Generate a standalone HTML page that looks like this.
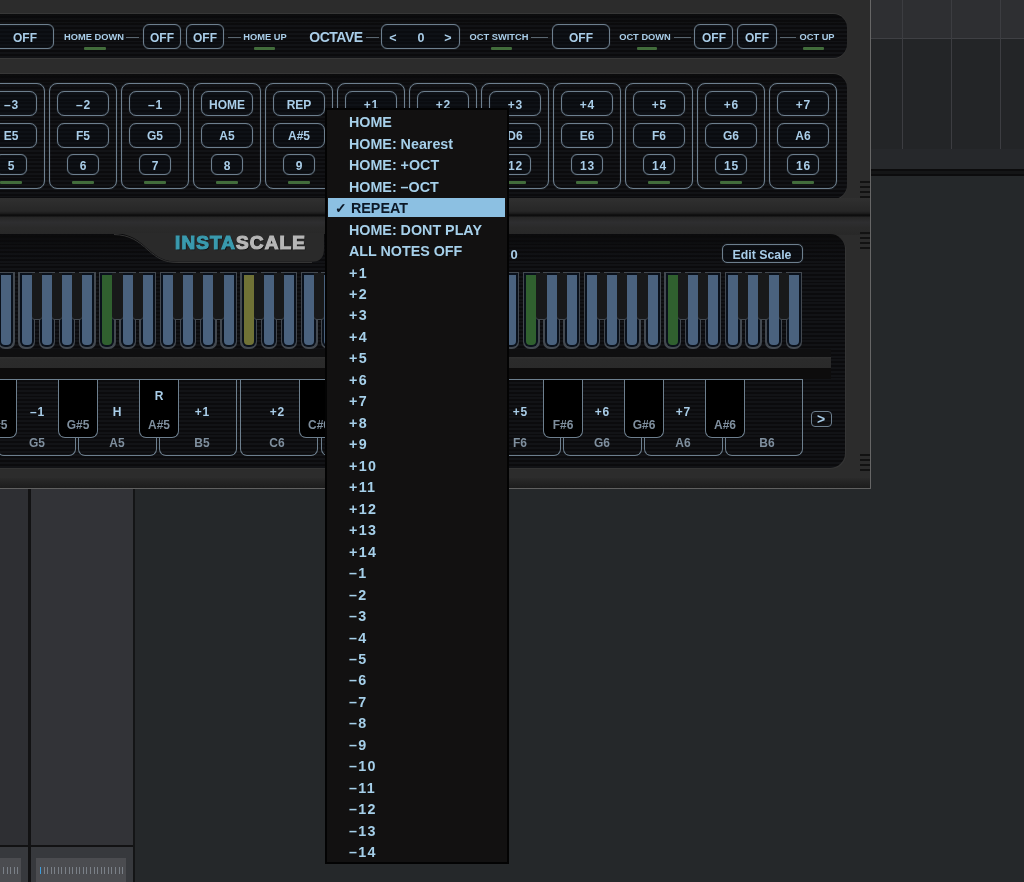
<!DOCTYPE html>
<html><head><meta charset="utf-8"><style>
html,body{margin:0;padding:0;width:1024px;height:882px;overflow:hidden;background:#25282a;position:relative;font-family:"Liberation Sans", sans-serif;}
div{position:absolute;}
.t{-webkit-font-smoothing:antialiased;will-change:transform;height:20px;line-height:20px;text-align:center;font-weight:bold;white-space:nowrap;}
</style></head><body>
<div style="left:871.00px;top:0.00px;width:153.00px;height:38.00px;background:#2e2f32"></div>
<div style="left:871.00px;top:38.00px;width:153.00px;height:1.00px;background:#3f4044"></div>
<div style="left:871.00px;top:39.00px;width:153.00px;height:110.00px;background:#232527"></div>
<div style="left:902.00px;top:0.00px;width:1.00px;height:149.00px;background:#3c3d41"></div>
<div style="left:951.00px;top:0.00px;width:1.00px;height:149.00px;background:#3c3d41"></div>
<div style="left:1000.00px;top:0.00px;width:1.00px;height:149.00px;background:#3c3d41"></div>
<div style="left:871.00px;top:149.00px;width:153.00px;height:20.00px;background:#26282b"></div>
<div style="left:871.00px;top:176.00px;width:153.00px;height:313.00px;background:#25282a"></div>
<div style="left:871.00px;top:169.00px;width:153.00px;height:7.00px;background:#0c0c0d"></div>
<div style="left:871.00px;top:171.00px;width:153.00px;height:3.00px;background:#141516"></div>
<div style="left:0.00px;top:489.00px;width:28.00px;height:393.00px;background:#2e2f33"></div>
<div style="left:28.00px;top:489.00px;width:2.50px;height:393.00px;background:#121213"></div>
<div style="left:30.50px;top:489.00px;width:102.50px;height:356.00px;background:#323337"></div>
<div style="left:133.00px;top:489.00px;width:2.00px;height:393.00px;background:#141516"></div>
<div style="left:0.00px;top:845.00px;width:133.00px;height:2.00px;background:#121213"></div>
<div style="left:0.00px;top:847.00px;width:28.00px;height:35.00px;background:#37393d"></div>
<div style="left:30.50px;top:847.00px;width:102.50px;height:35.00px;background:#37393d"></div>
<div style="left:36.00px;top:858.00px;width:90.00px;height:24.00px;background:#4b4c50"></div>
<div style="left:0.00px;top:858.00px;width:21.00px;height:24.00px;background:#4b4c50"></div>
<div style="left:40px;top:867px;width:1px;height:7px;background:#3c9ee0"></div><div style="left:44px;top:867px;width:1px;height:7px;background:#7a8088"></div><div style="left:47px;top:867px;width:1px;height:7px;background:#7a8088"></div><div style="left:51px;top:867px;width:1px;height:7px;background:#7a8088"></div><div style="left:54px;top:867px;width:1px;height:7px;background:#7a8088"></div><div style="left:58px;top:867px;width:1px;height:7px;background:#7a8088"></div><div style="left:61px;top:867px;width:1px;height:7px;background:#7a8088"></div><div style="left:65px;top:867px;width:1px;height:7px;background:#7a8088"></div><div style="left:69px;top:867px;width:1px;height:7px;background:#7a8088"></div><div style="left:72px;top:867px;width:1px;height:7px;background:#7a8088"></div><div style="left:76px;top:867px;width:1px;height:7px;background:#7a8088"></div><div style="left:79px;top:867px;width:1px;height:7px;background:#7a8088"></div><div style="left:83px;top:867px;width:1px;height:7px;background:#7a8088"></div><div style="left:86px;top:867px;width:1px;height:7px;background:#7a8088"></div><div style="left:90px;top:867px;width:1px;height:7px;background:#7a8088"></div><div style="left:94px;top:867px;width:1px;height:7px;background:#7a8088"></div><div style="left:97px;top:867px;width:1px;height:7px;background:#7a8088"></div><div style="left:101px;top:867px;width:1px;height:7px;background:#7a8088"></div><div style="left:104px;top:867px;width:1px;height:7px;background:#7a8088"></div><div style="left:108px;top:867px;width:1px;height:7px;background:#7a8088"></div><div style="left:111px;top:867px;width:1px;height:7px;background:#7a8088"></div><div style="left:115px;top:867px;width:1px;height:7px;background:#7a8088"></div><div style="left:119px;top:867px;width:1px;height:7px;background:#7a8088"></div><div style="left:122px;top:867px;width:1px;height:7px;background:#7a8088"></div><div style="left:3px;top:867px;width:1px;height:7px;background:#7a8088"></div><div style="left:7px;top:867px;width:1px;height:7px;background:#7a8088"></div><div style="left:10px;top:867px;width:1px;height:7px;background:#7a8088"></div><div style="left:14px;top:867px;width:1px;height:7px;background:#7a8088"></div><div style="left:17px;top:867px;width:1px;height:7px;background:#7a8088"></div>
<div style="left:0.00px;top:0.00px;width:870.00px;height:488.00px;background:#2c2c2c"></div>
<div style="left:0.00px;top:478.00px;width:870.00px;height:10.00px;background:linear-gradient(to bottom,#2a2a2a,#1c1c1c)"></div>
<div style="left:870.00px;top:0.00px;width:1.00px;height:489.00px;background:#666"></div>
<div style="left:0.00px;top:488.00px;width:871.00px;height:1.00px;background:#606060"></div>
<div style="left:-20.00px;top:14.30px;width:867.30px;height:43.50px;border-radius:14px;background:linear-gradient(to bottom,rgba(10,10,11,.8),rgba(10,10,11,0) 10px),repeating-linear-gradient(to bottom,#121316 0px,#121316 1.9px,#0b0b0d 1.9px,#0b0b0d 3.8px);box-shadow:0 1px 0 #383838,0 -1px 0 #373737"></div>
<div style="left:-10.00px;top:24.30px;width:64.00px;height:24.40px;border:1.3px solid #6d7f8e;border-radius:6px;box-sizing:border-box;box-shadow:0 0 1px rgba(120,140,158,.55),inset 0 0 1px rgba(120,140,158,.55);background:rgba(8,14,22,0.35)"></div>
<div class="t" style="left:-75.00px;top:27.90px;width:200px;font-size:12px;color:#a9cde8;">OFF</div>
<div class="t" style="left:-6.50px;top:27.20px;width:200px;font-size:9.3px;color:#a9cde8;">HOME DOWN</div>
<div style="left:84.00px;top:47.00px;width:22.00px;height:3.30px;background:#426c3b;border-radius:1px"></div>
<div style="left:126.00px;top:37.00px;width:13.00px;height:1.20px;background:#5a6670"></div>
<div style="left:143.00px;top:24.30px;width:38.00px;height:24.40px;border:1.3px solid #6d7f8e;border-radius:6px;box-sizing:border-box;box-shadow:0 0 1px rgba(120,140,158,.55),inset 0 0 1px rgba(120,140,158,.55);background:rgba(8,14,22,0.35)"></div>
<div class="t" style="left:62.00px;top:27.90px;width:200px;font-size:12px;color:#a9cde8;">OFF</div>
<div style="left:185.50px;top:24.30px;width:38.50px;height:24.40px;border:1.3px solid #6d7f8e;border-radius:6px;box-sizing:border-box;box-shadow:0 0 1px rgba(120,140,158,.55),inset 0 0 1px rgba(120,140,158,.55);background:rgba(8,14,22,0.35)"></div>
<div class="t" style="left:104.80px;top:27.90px;width:200px;font-size:12px;color:#a9cde8;">OFF</div>
<div style="left:228.00px;top:37.00px;width:12.60px;height:1.20px;background:#5a6670"></div>
<div class="t" style="left:165.00px;top:27.20px;width:200px;font-size:9.3px;color:#a9cde8;">HOME UP</div>
<div style="left:254.00px;top:47.00px;width:21.00px;height:3.30px;background:#426c3b;border-radius:1px"></div>
<div class="t" style="left:235.80px;top:26.90px;width:200px;font-size:14px;color:#a9cde8;letter-spacing:-0.5px">OCTAVE</div>
<div style="left:366.00px;top:37.00px;width:13.00px;height:1.20px;background:#5a6670"></div>
<div style="left:381.00px;top:24.30px;width:78.50px;height:24.40px;border:1.3px solid #6d7f8e;border-radius:6px;box-sizing:border-box;box-shadow:0 0 1px rgba(120,140,158,.55),inset 0 0 1px rgba(120,140,158,.55);background:rgba(8,14,22,0.35)"></div>
<div class="t" style="left:292.50px;top:27.90px;width:200px;font-size:12.5px;color:#a9cde8;">&lt;</div>
<div class="t" style="left:321.00px;top:27.90px;width:200px;font-size:12.5px;color:#a9cde8;">0</div>
<div class="t" style="left:348.00px;top:27.90px;width:200px;font-size:12.5px;color:#a9cde8;">&gt;</div>
<div class="t" style="left:398.60px;top:27.20px;width:200px;font-size:9.3px;color:#a9cde8;">OCT SWITCH</div>
<div style="left:491.00px;top:47.00px;width:21.00px;height:3.30px;background:#426c3b;border-radius:1px"></div>
<div style="left:531.00px;top:37.00px;width:17.00px;height:1.20px;background:#5a6670"></div>
<div style="left:552.00px;top:24.30px;width:58.00px;height:24.40px;border:1.3px solid #6d7f8e;border-radius:6px;box-sizing:border-box;box-shadow:0 0 1px rgba(120,140,158,.55),inset 0 0 1px rgba(120,140,158,.55);background:rgba(8,14,22,0.35)"></div>
<div class="t" style="left:481.00px;top:27.90px;width:200px;font-size:12px;color:#a9cde8;">OFF</div>
<div class="t" style="left:545.30px;top:27.20px;width:200px;font-size:9.3px;color:#a9cde8;">OCT DOWN</div>
<div style="left:637.00px;top:47.00px;width:20.00px;height:3.30px;background:#426c3b;border-radius:1px"></div>
<div style="left:674.00px;top:37.00px;width:16.50px;height:1.20px;background:#5a6670"></div>
<div style="left:694.40px;top:24.30px;width:39.10px;height:24.40px;border:1.3px solid #6d7f8e;border-radius:6px;box-sizing:border-box;box-shadow:0 0 1px rgba(120,140,158,.55),inset 0 0 1px rgba(120,140,158,.55);background:rgba(8,14,22,0.35)"></div>
<div class="t" style="left:614.00px;top:27.90px;width:200px;font-size:12px;color:#a9cde8;">OFF</div>
<div style="left:737.40px;top:24.30px;width:39.40px;height:24.40px;border:1.3px solid #6d7f8e;border-radius:6px;box-sizing:border-box;box-shadow:0 0 1px rgba(120,140,158,.55),inset 0 0 1px rgba(120,140,158,.55);background:rgba(8,14,22,0.35)"></div>
<div class="t" style="left:657.00px;top:27.90px;width:200px;font-size:12px;color:#a9cde8;">OFF</div>
<div style="left:780.00px;top:37.00px;width:16.00px;height:1.20px;background:#5a6670"></div>
<div class="t" style="left:717.00px;top:27.20px;width:200px;font-size:9.3px;color:#a9cde8;">OCT UP</div>
<div style="left:802.60px;top:47.00px;width:21.40px;height:3.30px;background:#426c3b;border-radius:1px"></div>
<div style="left:-20.00px;top:73.70px;width:867.30px;height:125.30px;border-radius:14px;background:linear-gradient(to bottom,rgba(10,10,11,.85),rgba(10,10,11,0) 14px),repeating-linear-gradient(to bottom,#121316 0px,#121316 1.9px,#0b0b0d 1.9px,#0b0b0d 3.8px);box-shadow:0 1px 0 #383838,0 -1px 0 #373737"></div>
<div style="left:-23.20px;top:83.30px;width:68.40px;height:105.80px;border:1.3px solid #6d7f8e;border-radius:8px;box-sizing:border-box;box-shadow:0 0 1px rgba(120,140,158,.55),inset 0 0 1px rgba(120,140,158,.55)"></div>
<div style="left:-15.30px;top:91.00px;width:52.60px;height:25.00px;border:1.3px solid #6d7f8e;border-radius:7px;box-sizing:border-box;background:rgba(8,14,22,0.35);box-shadow:0 0 1px rgba(120,140,158,.55),inset 0 0 1px rgba(120,140,158,.55)"></div>
<div style="left:-15.30px;top:122.70px;width:52.60px;height:25.00px;border:1.3px solid #6d7f8e;border-radius:7px;box-sizing:border-box;background:rgba(8,14,22,0.35);box-shadow:0 0 1px rgba(120,140,158,.55),inset 0 0 1px rgba(120,140,158,.55)"></div>
<div style="left:-5.20px;top:154.30px;width:32.40px;height:21.20px;border:1.3px solid #6d7f8e;border-radius:6px;box-sizing:border-box;background:rgba(8,14,22,0.35);box-shadow:0 0 1px rgba(120,140,158,.55),inset 0 0 1px rgba(120,140,158,.55)"></div>
<div style="left:0.10px;top:180.50px;width:21.80px;height:3.50px;background:#426c3b;border-radius:1px"></div>
<div class="t" style="left:-89.00px;top:94.90px;width:200px;font-size:12px;color:#a9cde8;letter-spacing:0.8px;text-indent:0.8px">&#8211;3</div>
<div class="t" style="left:-89.00px;top:126.20px;width:200px;font-size:12px;color:#a9cde8;">E5</div>
<div class="t" style="left:-89.00px;top:156.40px;width:200px;font-size:12px;color:#a9cde8;letter-spacing:0.8px;text-indent:0.8px">5</div>
<div style="left:48.80px;top:83.30px;width:68.40px;height:105.80px;border:1.3px solid #6d7f8e;border-radius:8px;box-sizing:border-box;box-shadow:0 0 1px rgba(120,140,158,.55),inset 0 0 1px rgba(120,140,158,.55)"></div>
<div style="left:56.70px;top:91.00px;width:52.60px;height:25.00px;border:1.3px solid #6d7f8e;border-radius:7px;box-sizing:border-box;background:rgba(8,14,22,0.35);box-shadow:0 0 1px rgba(120,140,158,.55),inset 0 0 1px rgba(120,140,158,.55)"></div>
<div style="left:56.70px;top:122.70px;width:52.60px;height:25.00px;border:1.3px solid #6d7f8e;border-radius:7px;box-sizing:border-box;background:rgba(8,14,22,0.35);box-shadow:0 0 1px rgba(120,140,158,.55),inset 0 0 1px rgba(120,140,158,.55)"></div>
<div style="left:66.80px;top:154.30px;width:32.40px;height:21.20px;border:1.3px solid #6d7f8e;border-radius:6px;box-sizing:border-box;background:rgba(8,14,22,0.35);box-shadow:0 0 1px rgba(120,140,158,.55),inset 0 0 1px rgba(120,140,158,.55)"></div>
<div style="left:72.10px;top:180.50px;width:21.80px;height:3.50px;background:#426c3b;border-radius:1px"></div>
<div class="t" style="left:-17.00px;top:94.90px;width:200px;font-size:12px;color:#a9cde8;letter-spacing:0.8px;text-indent:0.8px">&#8211;2</div>
<div class="t" style="left:-17.00px;top:126.20px;width:200px;font-size:12px;color:#a9cde8;">F5</div>
<div class="t" style="left:-17.00px;top:156.40px;width:200px;font-size:12px;color:#a9cde8;letter-spacing:0.8px;text-indent:0.8px">6</div>
<div style="left:120.80px;top:83.30px;width:68.40px;height:105.80px;border:1.3px solid #6d7f8e;border-radius:8px;box-sizing:border-box;box-shadow:0 0 1px rgba(120,140,158,.55),inset 0 0 1px rgba(120,140,158,.55)"></div>
<div style="left:128.70px;top:91.00px;width:52.60px;height:25.00px;border:1.3px solid #6d7f8e;border-radius:7px;box-sizing:border-box;background:rgba(8,14,22,0.35);box-shadow:0 0 1px rgba(120,140,158,.55),inset 0 0 1px rgba(120,140,158,.55)"></div>
<div style="left:128.70px;top:122.70px;width:52.60px;height:25.00px;border:1.3px solid #6d7f8e;border-radius:7px;box-sizing:border-box;background:rgba(8,14,22,0.35);box-shadow:0 0 1px rgba(120,140,158,.55),inset 0 0 1px rgba(120,140,158,.55)"></div>
<div style="left:138.80px;top:154.30px;width:32.40px;height:21.20px;border:1.3px solid #6d7f8e;border-radius:6px;box-sizing:border-box;background:rgba(8,14,22,0.35);box-shadow:0 0 1px rgba(120,140,158,.55),inset 0 0 1px rgba(120,140,158,.55)"></div>
<div style="left:144.10px;top:180.50px;width:21.80px;height:3.50px;background:#426c3b;border-radius:1px"></div>
<div class="t" style="left:55.00px;top:94.90px;width:200px;font-size:12px;color:#a9cde8;letter-spacing:0.8px;text-indent:0.8px">&#8211;1</div>
<div class="t" style="left:55.00px;top:126.20px;width:200px;font-size:12px;color:#a9cde8;">G5</div>
<div class="t" style="left:55.00px;top:156.40px;width:200px;font-size:12px;color:#a9cde8;letter-spacing:0.8px;text-indent:0.8px">7</div>
<div style="left:192.80px;top:83.30px;width:68.40px;height:105.80px;border:1.3px solid #6d7f8e;border-radius:8px;box-sizing:border-box;box-shadow:0 0 1px rgba(120,140,158,.55),inset 0 0 1px rgba(120,140,158,.55)"></div>
<div style="left:200.70px;top:91.00px;width:52.60px;height:25.00px;border:1.3px solid #6d7f8e;border-radius:7px;box-sizing:border-box;background:rgba(8,14,22,0.35);box-shadow:0 0 1px rgba(120,140,158,.55),inset 0 0 1px rgba(120,140,158,.55)"></div>
<div style="left:200.70px;top:122.70px;width:52.60px;height:25.00px;border:1.3px solid #6d7f8e;border-radius:7px;box-sizing:border-box;background:rgba(8,14,22,0.35);box-shadow:0 0 1px rgba(120,140,158,.55),inset 0 0 1px rgba(120,140,158,.55)"></div>
<div style="left:210.80px;top:154.30px;width:32.40px;height:21.20px;border:1.3px solid #6d7f8e;border-radius:6px;box-sizing:border-box;background:rgba(8,14,22,0.35);box-shadow:0 0 1px rgba(120,140,158,.55),inset 0 0 1px rgba(120,140,158,.55)"></div>
<div style="left:216.10px;top:180.50px;width:21.80px;height:3.50px;background:#426c3b;border-radius:1px"></div>
<div class="t" style="left:127.00px;top:94.90px;width:200px;font-size:12px;color:#a9cde8;">HOME</div>
<div class="t" style="left:127.00px;top:126.20px;width:200px;font-size:12px;color:#a9cde8;">A5</div>
<div class="t" style="left:127.00px;top:156.40px;width:200px;font-size:12px;color:#a9cde8;letter-spacing:0.8px;text-indent:0.8px">8</div>
<div style="left:264.80px;top:83.30px;width:68.40px;height:105.80px;border:1.3px solid #6d7f8e;border-radius:8px;box-sizing:border-box;box-shadow:0 0 1px rgba(120,140,158,.55),inset 0 0 1px rgba(120,140,158,.55)"></div>
<div style="left:272.70px;top:91.00px;width:52.60px;height:25.00px;border:1.3px solid #6d7f8e;border-radius:7px;box-sizing:border-box;background:rgba(8,14,22,0.35);box-shadow:0 0 1px rgba(120,140,158,.55),inset 0 0 1px rgba(120,140,158,.55)"></div>
<div style="left:272.70px;top:122.70px;width:52.60px;height:25.00px;border:1.3px solid #6d7f8e;border-radius:7px;box-sizing:border-box;background:rgba(8,14,22,0.35);box-shadow:0 0 1px rgba(120,140,158,.55),inset 0 0 1px rgba(120,140,158,.55)"></div>
<div style="left:282.80px;top:154.30px;width:32.40px;height:21.20px;border:1.3px solid #6d7f8e;border-radius:6px;box-sizing:border-box;background:rgba(8,14,22,0.35);box-shadow:0 0 1px rgba(120,140,158,.55),inset 0 0 1px rgba(120,140,158,.55)"></div>
<div style="left:288.10px;top:180.50px;width:21.80px;height:3.50px;background:#426c3b;border-radius:1px"></div>
<div class="t" style="left:199.00px;top:94.90px;width:200px;font-size:12px;color:#a9cde8;">REP</div>
<div class="t" style="left:199.00px;top:126.20px;width:200px;font-size:12px;color:#a9cde8;">A#5</div>
<div class="t" style="left:199.00px;top:156.40px;width:200px;font-size:12px;color:#a9cde8;letter-spacing:0.8px;text-indent:0.8px">9</div>
<div style="left:336.80px;top:83.30px;width:68.40px;height:105.80px;border:1.3px solid #6d7f8e;border-radius:8px;box-sizing:border-box;box-shadow:0 0 1px rgba(120,140,158,.55),inset 0 0 1px rgba(120,140,158,.55)"></div>
<div style="left:344.70px;top:91.00px;width:52.60px;height:25.00px;border:1.3px solid #6d7f8e;border-radius:7px;box-sizing:border-box;background:rgba(8,14,22,0.35);box-shadow:0 0 1px rgba(120,140,158,.55),inset 0 0 1px rgba(120,140,158,.55)"></div>
<div style="left:344.70px;top:122.70px;width:52.60px;height:25.00px;border:1.3px solid #6d7f8e;border-radius:7px;box-sizing:border-box;background:rgba(8,14,22,0.35);box-shadow:0 0 1px rgba(120,140,158,.55),inset 0 0 1px rgba(120,140,158,.55)"></div>
<div style="left:354.80px;top:154.30px;width:32.40px;height:21.20px;border:1.3px solid #6d7f8e;border-radius:6px;box-sizing:border-box;background:rgba(8,14,22,0.35);box-shadow:0 0 1px rgba(120,140,158,.55),inset 0 0 1px rgba(120,140,158,.55)"></div>
<div style="left:360.10px;top:180.50px;width:21.80px;height:3.50px;background:#426c3b;border-radius:1px"></div>
<div class="t" style="left:271.00px;top:94.90px;width:200px;font-size:12px;color:#a9cde8;letter-spacing:0.8px;text-indent:0.8px">+1</div>
<div class="t" style="left:271.00px;top:126.20px;width:200px;font-size:12px;color:#a9cde8;">B5</div>
<div class="t" style="left:271.00px;top:156.40px;width:200px;font-size:12px;color:#a9cde8;letter-spacing:0.8px;text-indent:0.8px">10</div>
<div style="left:408.80px;top:83.30px;width:68.40px;height:105.80px;border:1.3px solid #6d7f8e;border-radius:8px;box-sizing:border-box;box-shadow:0 0 1px rgba(120,140,158,.55),inset 0 0 1px rgba(120,140,158,.55)"></div>
<div style="left:416.70px;top:91.00px;width:52.60px;height:25.00px;border:1.3px solid #6d7f8e;border-radius:7px;box-sizing:border-box;background:rgba(8,14,22,0.35);box-shadow:0 0 1px rgba(120,140,158,.55),inset 0 0 1px rgba(120,140,158,.55)"></div>
<div style="left:416.70px;top:122.70px;width:52.60px;height:25.00px;border:1.3px solid #6d7f8e;border-radius:7px;box-sizing:border-box;background:rgba(8,14,22,0.35);box-shadow:0 0 1px rgba(120,140,158,.55),inset 0 0 1px rgba(120,140,158,.55)"></div>
<div style="left:426.80px;top:154.30px;width:32.40px;height:21.20px;border:1.3px solid #6d7f8e;border-radius:6px;box-sizing:border-box;background:rgba(8,14,22,0.35);box-shadow:0 0 1px rgba(120,140,158,.55),inset 0 0 1px rgba(120,140,158,.55)"></div>
<div style="left:432.10px;top:180.50px;width:21.80px;height:3.50px;background:#426c3b;border-radius:1px"></div>
<div class="t" style="left:343.00px;top:94.90px;width:200px;font-size:12px;color:#a9cde8;letter-spacing:0.8px;text-indent:0.8px">+2</div>
<div class="t" style="left:343.00px;top:126.20px;width:200px;font-size:12px;color:#a9cde8;">C6</div>
<div class="t" style="left:343.00px;top:156.40px;width:200px;font-size:12px;color:#a9cde8;letter-spacing:0.8px;text-indent:0.8px">11</div>
<div style="left:480.80px;top:83.30px;width:68.40px;height:105.80px;border:1.3px solid #6d7f8e;border-radius:8px;box-sizing:border-box;box-shadow:0 0 1px rgba(120,140,158,.55),inset 0 0 1px rgba(120,140,158,.55)"></div>
<div style="left:488.70px;top:91.00px;width:52.60px;height:25.00px;border:1.3px solid #6d7f8e;border-radius:7px;box-sizing:border-box;background:rgba(8,14,22,0.35);box-shadow:0 0 1px rgba(120,140,158,.55),inset 0 0 1px rgba(120,140,158,.55)"></div>
<div style="left:488.70px;top:122.70px;width:52.60px;height:25.00px;border:1.3px solid #6d7f8e;border-radius:7px;box-sizing:border-box;background:rgba(8,14,22,0.35);box-shadow:0 0 1px rgba(120,140,158,.55),inset 0 0 1px rgba(120,140,158,.55)"></div>
<div style="left:498.80px;top:154.30px;width:32.40px;height:21.20px;border:1.3px solid #6d7f8e;border-radius:6px;box-sizing:border-box;background:rgba(8,14,22,0.35);box-shadow:0 0 1px rgba(120,140,158,.55),inset 0 0 1px rgba(120,140,158,.55)"></div>
<div style="left:504.10px;top:180.50px;width:21.80px;height:3.50px;background:#426c3b;border-radius:1px"></div>
<div class="t" style="left:415.00px;top:94.90px;width:200px;font-size:12px;color:#a9cde8;letter-spacing:0.8px;text-indent:0.8px">+3</div>
<div class="t" style="left:415.00px;top:126.20px;width:200px;font-size:12px;color:#a9cde8;">D6</div>
<div class="t" style="left:415.00px;top:156.40px;width:200px;font-size:12px;color:#a9cde8;letter-spacing:0.8px;text-indent:0.8px">12</div>
<div style="left:552.80px;top:83.30px;width:68.40px;height:105.80px;border:1.3px solid #6d7f8e;border-radius:8px;box-sizing:border-box;box-shadow:0 0 1px rgba(120,140,158,.55),inset 0 0 1px rgba(120,140,158,.55)"></div>
<div style="left:560.70px;top:91.00px;width:52.60px;height:25.00px;border:1.3px solid #6d7f8e;border-radius:7px;box-sizing:border-box;background:rgba(8,14,22,0.35);box-shadow:0 0 1px rgba(120,140,158,.55),inset 0 0 1px rgba(120,140,158,.55)"></div>
<div style="left:560.70px;top:122.70px;width:52.60px;height:25.00px;border:1.3px solid #6d7f8e;border-radius:7px;box-sizing:border-box;background:rgba(8,14,22,0.35);box-shadow:0 0 1px rgba(120,140,158,.55),inset 0 0 1px rgba(120,140,158,.55)"></div>
<div style="left:570.80px;top:154.30px;width:32.40px;height:21.20px;border:1.3px solid #6d7f8e;border-radius:6px;box-sizing:border-box;background:rgba(8,14,22,0.35);box-shadow:0 0 1px rgba(120,140,158,.55),inset 0 0 1px rgba(120,140,158,.55)"></div>
<div style="left:576.10px;top:180.50px;width:21.80px;height:3.50px;background:#426c3b;border-radius:1px"></div>
<div class="t" style="left:487.00px;top:94.90px;width:200px;font-size:12px;color:#a9cde8;letter-spacing:0.8px;text-indent:0.8px">+4</div>
<div class="t" style="left:487.00px;top:126.20px;width:200px;font-size:12px;color:#a9cde8;">E6</div>
<div class="t" style="left:487.00px;top:156.40px;width:200px;font-size:12px;color:#a9cde8;letter-spacing:0.8px;text-indent:0.8px">13</div>
<div style="left:624.80px;top:83.30px;width:68.40px;height:105.80px;border:1.3px solid #6d7f8e;border-radius:8px;box-sizing:border-box;box-shadow:0 0 1px rgba(120,140,158,.55),inset 0 0 1px rgba(120,140,158,.55)"></div>
<div style="left:632.70px;top:91.00px;width:52.60px;height:25.00px;border:1.3px solid #6d7f8e;border-radius:7px;box-sizing:border-box;background:rgba(8,14,22,0.35);box-shadow:0 0 1px rgba(120,140,158,.55),inset 0 0 1px rgba(120,140,158,.55)"></div>
<div style="left:632.70px;top:122.70px;width:52.60px;height:25.00px;border:1.3px solid #6d7f8e;border-radius:7px;box-sizing:border-box;background:rgba(8,14,22,0.35);box-shadow:0 0 1px rgba(120,140,158,.55),inset 0 0 1px rgba(120,140,158,.55)"></div>
<div style="left:642.80px;top:154.30px;width:32.40px;height:21.20px;border:1.3px solid #6d7f8e;border-radius:6px;box-sizing:border-box;background:rgba(8,14,22,0.35);box-shadow:0 0 1px rgba(120,140,158,.55),inset 0 0 1px rgba(120,140,158,.55)"></div>
<div style="left:648.10px;top:180.50px;width:21.80px;height:3.50px;background:#426c3b;border-radius:1px"></div>
<div class="t" style="left:559.00px;top:94.90px;width:200px;font-size:12px;color:#a9cde8;letter-spacing:0.8px;text-indent:0.8px">+5</div>
<div class="t" style="left:559.00px;top:126.20px;width:200px;font-size:12px;color:#a9cde8;">F6</div>
<div class="t" style="left:559.00px;top:156.40px;width:200px;font-size:12px;color:#a9cde8;letter-spacing:0.8px;text-indent:0.8px">14</div>
<div style="left:696.80px;top:83.30px;width:68.40px;height:105.80px;border:1.3px solid #6d7f8e;border-radius:8px;box-sizing:border-box;box-shadow:0 0 1px rgba(120,140,158,.55),inset 0 0 1px rgba(120,140,158,.55)"></div>
<div style="left:704.70px;top:91.00px;width:52.60px;height:25.00px;border:1.3px solid #6d7f8e;border-radius:7px;box-sizing:border-box;background:rgba(8,14,22,0.35);box-shadow:0 0 1px rgba(120,140,158,.55),inset 0 0 1px rgba(120,140,158,.55)"></div>
<div style="left:704.70px;top:122.70px;width:52.60px;height:25.00px;border:1.3px solid #6d7f8e;border-radius:7px;box-sizing:border-box;background:rgba(8,14,22,0.35);box-shadow:0 0 1px rgba(120,140,158,.55),inset 0 0 1px rgba(120,140,158,.55)"></div>
<div style="left:714.80px;top:154.30px;width:32.40px;height:21.20px;border:1.3px solid #6d7f8e;border-radius:6px;box-sizing:border-box;background:rgba(8,14,22,0.35);box-shadow:0 0 1px rgba(120,140,158,.55),inset 0 0 1px rgba(120,140,158,.55)"></div>
<div style="left:720.10px;top:180.50px;width:21.80px;height:3.50px;background:#426c3b;border-radius:1px"></div>
<div class="t" style="left:631.00px;top:94.90px;width:200px;font-size:12px;color:#a9cde8;letter-spacing:0.8px;text-indent:0.8px">+6</div>
<div class="t" style="left:631.00px;top:126.20px;width:200px;font-size:12px;color:#a9cde8;">G6</div>
<div class="t" style="left:631.00px;top:156.40px;width:200px;font-size:12px;color:#a9cde8;letter-spacing:0.8px;text-indent:0.8px">15</div>
<div style="left:768.80px;top:83.30px;width:68.40px;height:105.80px;border:1.3px solid #6d7f8e;border-radius:8px;box-sizing:border-box;box-shadow:0 0 1px rgba(120,140,158,.55),inset 0 0 1px rgba(120,140,158,.55)"></div>
<div style="left:776.70px;top:91.00px;width:52.60px;height:25.00px;border:1.3px solid #6d7f8e;border-radius:7px;box-sizing:border-box;background:rgba(8,14,22,0.35);box-shadow:0 0 1px rgba(120,140,158,.55),inset 0 0 1px rgba(120,140,158,.55)"></div>
<div style="left:776.70px;top:122.70px;width:52.60px;height:25.00px;border:1.3px solid #6d7f8e;border-radius:7px;box-sizing:border-box;background:rgba(8,14,22,0.35);box-shadow:0 0 1px rgba(120,140,158,.55),inset 0 0 1px rgba(120,140,158,.55)"></div>
<div style="left:786.80px;top:154.30px;width:32.40px;height:21.20px;border:1.3px solid #6d7f8e;border-radius:6px;box-sizing:border-box;background:rgba(8,14,22,0.35);box-shadow:0 0 1px rgba(120,140,158,.55),inset 0 0 1px rgba(120,140,158,.55)"></div>
<div style="left:792.10px;top:180.50px;width:21.80px;height:3.50px;background:#426c3b;border-radius:1px"></div>
<div class="t" style="left:703.00px;top:94.90px;width:200px;font-size:12px;color:#a9cde8;letter-spacing:0.8px;text-indent:0.8px">+7</div>
<div class="t" style="left:703.00px;top:126.20px;width:200px;font-size:12px;color:#a9cde8;">A6</div>
<div class="t" style="left:703.00px;top:156.40px;width:200px;font-size:12px;color:#a9cde8;letter-spacing:0.8px;text-indent:0.8px">16</div>
<div style="left:0.00px;top:198.00px;width:870.00px;height:14.00px;background:linear-gradient(to bottom,#303030,#262626)"></div>
<div style="left:0.00px;top:210.50px;width:870.00px;height:6.00px;background:linear-gradient(to bottom,#272727,#1c1c1c 40%,#0a0a0a 70%,#1f1f1f)"></div>
<div style="left:0.00px;top:216.50px;width:870.00px;height:18.00px;background:linear-gradient(to bottom,#262626,#2e2e30 30%,#2a2a2a 60%,#282828)"></div>
<div style="left:-20.00px;top:234.40px;width:865.20px;height:233.20px;border-radius:15px;background:linear-gradient(to bottom,rgba(10,10,11,.9),rgba(10,10,11,.3) 16px,rgba(10,10,11,0) 30px),repeating-linear-gradient(to bottom,#121316 0px,#121316 1.9px,#0b0b0d 1.9px,#0b0b0d 3.8px);box-shadow:1px 1px 0 #343434"></div>
<svg style="position:absolute;left:0;top:0" width="870" height="270"><path d="M0,233 L114,233 C130,233.5 138,240 148,249 C157,257 164,261.7 178,261.7 L312,261.7 Q324,261.7 324,249 L324,233 Z" fill="#2a2a2a"/><path d="M114,234.5 C130,235 138,241 148,250 C157,258 164,262.5 178,262.5 L312,262.5" fill="none" stroke="#353535" stroke-width="1"/></svg>
<div class="t" style="left:174.5px;top:231.6px;width:140px;height:22px;line-height:22px;text-align:left;font-size:19px;letter-spacing:1.1px;-webkit-text-stroke:1.2px;text-shadow:0 0 1px #000,1px 1px 1px #000"><span style="color:#3a9aae">INSTA</span><span style="color:#b6b6b6">SCALE</span></div>
<div class="t" style="left:414.00px;top:245.30px;width:200px;font-size:13px;color:#a9cde8;">0</div>
<div style="left:722.00px;top:243.80px;width:81.00px;height:19.30px;border:1.3px solid #6d7f8e;border-radius:5px;box-sizing:border-box;background:rgba(8,14,22,0.35);box-shadow:0 0 1px rgba(120,140,158,.55),inset 0 0 1px rgba(120,140,158,.55)"></div>
<div class="t" style="left:662.40px;top:244.70px;width:200px;font-size:12.3px;color:#a9cde8;">Edit Scale</div>
<div style="left:-1.85px;top:272.00px;width:16.60px;height:76.50px;background:#434950;border-radius:0 0 7px 7px"></div>
<div style="left:-0.55px;top:272.80px;width:14.00px;height:74.20px;background:#0a111b;border-radius:0 0 6px 6px"></div>
<div style="left:1.45px;top:275.00px;width:10.00px;height:69.60px;background:#4a627e;border-radius:0 0 4px 4px"></div>
<div style="left:18.34px;top:272.00px;width:16.60px;height:76.50px;background:#434950;border-radius:0 0 7px 7px"></div>
<div style="left:19.64px;top:272.80px;width:14.00px;height:74.20px;background:#0a111b;border-radius:0 0 6px 6px"></div>
<div style="left:21.64px;top:275.00px;width:10.00px;height:69.60px;background:#4a627e;border-radius:0 0 4px 4px"></div>
<div style="left:38.53px;top:272.00px;width:16.60px;height:76.50px;background:#434950;border-radius:0 0 7px 7px"></div>
<div style="left:39.83px;top:272.80px;width:14.00px;height:74.20px;background:#0a111b;border-radius:0 0 6px 6px"></div>
<div style="left:41.83px;top:275.00px;width:10.00px;height:69.60px;background:#4a627e;border-radius:0 0 4px 4px"></div>
<div style="left:58.72px;top:272.00px;width:16.60px;height:76.50px;background:#434950;border-radius:0 0 7px 7px"></div>
<div style="left:60.02px;top:272.80px;width:14.00px;height:74.20px;background:#0a111b;border-radius:0 0 6px 6px"></div>
<div style="left:62.02px;top:275.00px;width:10.00px;height:69.60px;background:#4a627e;border-radius:0 0 4px 4px"></div>
<div style="left:78.91px;top:272.00px;width:16.60px;height:76.50px;background:#434950;border-radius:0 0 7px 7px"></div>
<div style="left:80.21px;top:272.80px;width:14.00px;height:74.20px;background:#0a111b;border-radius:0 0 6px 6px"></div>
<div style="left:82.21px;top:275.00px;width:10.00px;height:69.60px;background:#4a627e;border-radius:0 0 4px 4px"></div>
<div style="left:99.10px;top:272.00px;width:16.60px;height:76.50px;background:#434950;border-radius:0 0 7px 7px"></div>
<div style="left:100.40px;top:272.80px;width:14.00px;height:74.20px;background:#0a111b;border-radius:0 0 6px 6px"></div>
<div style="left:102.40px;top:275.00px;width:10.00px;height:69.60px;background:#30602f;border-radius:0 0 4px 4px"></div>
<div style="left:119.29px;top:272.00px;width:16.60px;height:76.50px;background:#434950;border-radius:0 0 7px 7px"></div>
<div style="left:120.59px;top:272.80px;width:14.00px;height:74.20px;background:#0a111b;border-radius:0 0 6px 6px"></div>
<div style="left:122.59px;top:275.00px;width:10.00px;height:69.60px;background:#4a627e;border-radius:0 0 4px 4px"></div>
<div style="left:139.48px;top:272.00px;width:16.60px;height:76.50px;background:#434950;border-radius:0 0 7px 7px"></div>
<div style="left:140.78px;top:272.80px;width:14.00px;height:74.20px;background:#0a111b;border-radius:0 0 6px 6px"></div>
<div style="left:142.78px;top:275.00px;width:10.00px;height:69.60px;background:#4a627e;border-radius:0 0 4px 4px"></div>
<div style="left:159.67px;top:272.00px;width:16.60px;height:76.50px;background:#434950;border-radius:0 0 7px 7px"></div>
<div style="left:160.97px;top:272.80px;width:14.00px;height:74.20px;background:#0a111b;border-radius:0 0 6px 6px"></div>
<div style="left:162.97px;top:275.00px;width:10.00px;height:69.60px;background:#4a627e;border-radius:0 0 4px 4px"></div>
<div style="left:179.86px;top:272.00px;width:16.60px;height:76.50px;background:#434950;border-radius:0 0 7px 7px"></div>
<div style="left:181.16px;top:272.80px;width:14.00px;height:74.20px;background:#0a111b;border-radius:0 0 6px 6px"></div>
<div style="left:183.16px;top:275.00px;width:10.00px;height:69.60px;background:#4a627e;border-radius:0 0 4px 4px"></div>
<div style="left:200.05px;top:272.00px;width:16.60px;height:76.50px;background:#434950;border-radius:0 0 7px 7px"></div>
<div style="left:201.35px;top:272.80px;width:14.00px;height:74.20px;background:#0a111b;border-radius:0 0 6px 6px"></div>
<div style="left:203.35px;top:275.00px;width:10.00px;height:69.60px;background:#4a627e;border-radius:0 0 4px 4px"></div>
<div style="left:220.24px;top:272.00px;width:16.60px;height:76.50px;background:#434950;border-radius:0 0 7px 7px"></div>
<div style="left:221.54px;top:272.80px;width:14.00px;height:74.20px;background:#0a111b;border-radius:0 0 6px 6px"></div>
<div style="left:223.54px;top:275.00px;width:10.00px;height:69.60px;background:#4a627e;border-radius:0 0 4px 4px"></div>
<div style="left:240.43px;top:272.00px;width:16.60px;height:76.50px;background:#434950;border-radius:0 0 7px 7px"></div>
<div style="left:241.73px;top:272.80px;width:14.00px;height:74.20px;background:#0a111b;border-radius:0 0 6px 6px"></div>
<div style="left:243.73px;top:275.00px;width:10.00px;height:69.60px;background:#707236;border-radius:0 0 4px 4px"></div>
<div style="left:260.62px;top:272.00px;width:16.60px;height:76.50px;background:#434950;border-radius:0 0 7px 7px"></div>
<div style="left:261.92px;top:272.80px;width:14.00px;height:74.20px;background:#0a111b;border-radius:0 0 6px 6px"></div>
<div style="left:263.92px;top:275.00px;width:10.00px;height:69.60px;background:#4a627e;border-radius:0 0 4px 4px"></div>
<div style="left:280.81px;top:272.00px;width:16.60px;height:76.50px;background:#434950;border-radius:0 0 7px 7px"></div>
<div style="left:282.11px;top:272.80px;width:14.00px;height:74.20px;background:#0a111b;border-radius:0 0 6px 6px"></div>
<div style="left:284.11px;top:275.00px;width:10.00px;height:69.60px;background:#4a627e;border-radius:0 0 4px 4px"></div>
<div style="left:301.00px;top:272.00px;width:16.60px;height:76.50px;background:#434950;border-radius:0 0 7px 7px"></div>
<div style="left:302.30px;top:272.80px;width:14.00px;height:74.20px;background:#0a111b;border-radius:0 0 6px 6px"></div>
<div style="left:304.30px;top:275.00px;width:10.00px;height:69.60px;background:#4a627e;border-radius:0 0 4px 4px"></div>
<div style="left:321.19px;top:272.00px;width:16.60px;height:76.50px;background:#434950;border-radius:0 0 7px 7px"></div>
<div style="left:322.49px;top:272.80px;width:14.00px;height:74.20px;background:#0a111b;border-radius:0 0 6px 6px"></div>
<div style="left:324.49px;top:275.00px;width:10.00px;height:69.60px;background:#4a627e;border-radius:0 0 4px 4px"></div>
<div style="left:341.38px;top:272.00px;width:16.60px;height:76.50px;background:#434950;border-radius:0 0 7px 7px"></div>
<div style="left:342.68px;top:272.80px;width:14.00px;height:74.20px;background:#0a111b;border-radius:0 0 6px 6px"></div>
<div style="left:344.68px;top:275.00px;width:10.00px;height:69.60px;background:#4a627e;border-radius:0 0 4px 4px"></div>
<div style="left:361.57px;top:272.00px;width:16.60px;height:76.50px;background:#434950;border-radius:0 0 7px 7px"></div>
<div style="left:362.87px;top:272.80px;width:14.00px;height:74.20px;background:#0a111b;border-radius:0 0 6px 6px"></div>
<div style="left:364.87px;top:275.00px;width:10.00px;height:69.60px;background:#4a627e;border-radius:0 0 4px 4px"></div>
<div style="left:381.76px;top:272.00px;width:16.60px;height:76.50px;background:#434950;border-radius:0 0 7px 7px"></div>
<div style="left:383.06px;top:272.80px;width:14.00px;height:74.20px;background:#0a111b;border-radius:0 0 6px 6px"></div>
<div style="left:385.06px;top:275.00px;width:10.00px;height:69.60px;background:#4a627e;border-radius:0 0 4px 4px"></div>
<div style="left:401.95px;top:272.00px;width:16.60px;height:76.50px;background:#434950;border-radius:0 0 7px 7px"></div>
<div style="left:403.25px;top:272.80px;width:14.00px;height:74.20px;background:#0a111b;border-radius:0 0 6px 6px"></div>
<div style="left:405.25px;top:275.00px;width:10.00px;height:69.60px;background:#4a627e;border-radius:0 0 4px 4px"></div>
<div style="left:422.14px;top:272.00px;width:16.60px;height:76.50px;background:#434950;border-radius:0 0 7px 7px"></div>
<div style="left:423.44px;top:272.80px;width:14.00px;height:74.20px;background:#0a111b;border-radius:0 0 6px 6px"></div>
<div style="left:425.44px;top:275.00px;width:10.00px;height:69.60px;background:#4a627e;border-radius:0 0 4px 4px"></div>
<div style="left:442.33px;top:272.00px;width:16.60px;height:76.50px;background:#434950;border-radius:0 0 7px 7px"></div>
<div style="left:443.63px;top:272.80px;width:14.00px;height:74.20px;background:#0a111b;border-radius:0 0 6px 6px"></div>
<div style="left:445.63px;top:275.00px;width:10.00px;height:69.60px;background:#4a627e;border-radius:0 0 4px 4px"></div>
<div style="left:462.52px;top:272.00px;width:16.60px;height:76.50px;background:#434950;border-radius:0 0 7px 7px"></div>
<div style="left:463.82px;top:272.80px;width:14.00px;height:74.20px;background:#0a111b;border-radius:0 0 6px 6px"></div>
<div style="left:465.82px;top:275.00px;width:10.00px;height:69.60px;background:#4a627e;border-radius:0 0 4px 4px"></div>
<div style="left:482.71px;top:272.00px;width:16.60px;height:76.50px;background:#434950;border-radius:0 0 7px 7px"></div>
<div style="left:484.01px;top:272.80px;width:14.00px;height:74.20px;background:#0a111b;border-radius:0 0 6px 6px"></div>
<div style="left:486.01px;top:275.00px;width:10.00px;height:69.60px;background:#4a627e;border-radius:0 0 4px 4px"></div>
<div style="left:502.90px;top:272.00px;width:16.60px;height:76.50px;background:#434950;border-radius:0 0 7px 7px"></div>
<div style="left:504.20px;top:272.80px;width:14.00px;height:74.20px;background:#0a111b;border-radius:0 0 6px 6px"></div>
<div style="left:506.20px;top:275.00px;width:10.00px;height:69.60px;background:#4a627e;border-radius:0 0 4px 4px"></div>
<div style="left:523.09px;top:272.00px;width:16.60px;height:76.50px;background:#434950;border-radius:0 0 7px 7px"></div>
<div style="left:524.39px;top:272.80px;width:14.00px;height:74.20px;background:#0a111b;border-radius:0 0 6px 6px"></div>
<div style="left:526.39px;top:275.00px;width:10.00px;height:69.60px;background:#30602f;border-radius:0 0 4px 4px"></div>
<div style="left:543.28px;top:272.00px;width:16.60px;height:76.50px;background:#434950;border-radius:0 0 7px 7px"></div>
<div style="left:544.58px;top:272.80px;width:14.00px;height:74.20px;background:#0a111b;border-radius:0 0 6px 6px"></div>
<div style="left:546.58px;top:275.00px;width:10.00px;height:69.60px;background:#4a627e;border-radius:0 0 4px 4px"></div>
<div style="left:563.47px;top:272.00px;width:16.60px;height:76.50px;background:#434950;border-radius:0 0 7px 7px"></div>
<div style="left:564.77px;top:272.80px;width:14.00px;height:74.20px;background:#0a111b;border-radius:0 0 6px 6px"></div>
<div style="left:566.77px;top:275.00px;width:10.00px;height:69.60px;background:#4a627e;border-radius:0 0 4px 4px"></div>
<div style="left:583.66px;top:272.00px;width:16.60px;height:76.50px;background:#434950;border-radius:0 0 7px 7px"></div>
<div style="left:584.96px;top:272.80px;width:14.00px;height:74.20px;background:#0a111b;border-radius:0 0 6px 6px"></div>
<div style="left:586.96px;top:275.00px;width:10.00px;height:69.60px;background:#4a627e;border-radius:0 0 4px 4px"></div>
<div style="left:603.85px;top:272.00px;width:16.60px;height:76.50px;background:#434950;border-radius:0 0 7px 7px"></div>
<div style="left:605.15px;top:272.80px;width:14.00px;height:74.20px;background:#0a111b;border-radius:0 0 6px 6px"></div>
<div style="left:607.15px;top:275.00px;width:10.00px;height:69.60px;background:#4a627e;border-radius:0 0 4px 4px"></div>
<div style="left:624.04px;top:272.00px;width:16.60px;height:76.50px;background:#434950;border-radius:0 0 7px 7px"></div>
<div style="left:625.34px;top:272.80px;width:14.00px;height:74.20px;background:#0a111b;border-radius:0 0 6px 6px"></div>
<div style="left:627.34px;top:275.00px;width:10.00px;height:69.60px;background:#4a627e;border-radius:0 0 4px 4px"></div>
<div style="left:644.23px;top:272.00px;width:16.60px;height:76.50px;background:#434950;border-radius:0 0 7px 7px"></div>
<div style="left:645.53px;top:272.80px;width:14.00px;height:74.20px;background:#0a111b;border-radius:0 0 6px 6px"></div>
<div style="left:647.53px;top:275.00px;width:10.00px;height:69.60px;background:#4a627e;border-radius:0 0 4px 4px"></div>
<div style="left:664.42px;top:272.00px;width:16.60px;height:76.50px;background:#434950;border-radius:0 0 7px 7px"></div>
<div style="left:665.72px;top:272.80px;width:14.00px;height:74.20px;background:#0a111b;border-radius:0 0 6px 6px"></div>
<div style="left:667.72px;top:275.00px;width:10.00px;height:69.60px;background:#30602f;border-radius:0 0 4px 4px"></div>
<div style="left:684.61px;top:272.00px;width:16.60px;height:76.50px;background:#434950;border-radius:0 0 7px 7px"></div>
<div style="left:685.91px;top:272.80px;width:14.00px;height:74.20px;background:#0a111b;border-radius:0 0 6px 6px"></div>
<div style="left:687.91px;top:275.00px;width:10.00px;height:69.60px;background:#4a627e;border-radius:0 0 4px 4px"></div>
<div style="left:704.80px;top:272.00px;width:16.60px;height:76.50px;background:#434950;border-radius:0 0 7px 7px"></div>
<div style="left:706.10px;top:272.80px;width:14.00px;height:74.20px;background:#0a111b;border-radius:0 0 6px 6px"></div>
<div style="left:708.10px;top:275.00px;width:10.00px;height:69.60px;background:#4a627e;border-radius:0 0 4px 4px"></div>
<div style="left:724.99px;top:272.00px;width:16.60px;height:76.50px;background:#434950;border-radius:0 0 7px 7px"></div>
<div style="left:726.29px;top:272.80px;width:14.00px;height:74.20px;background:#0a111b;border-radius:0 0 6px 6px"></div>
<div style="left:728.29px;top:275.00px;width:10.00px;height:69.60px;background:#4a627e;border-radius:0 0 4px 4px"></div>
<div style="left:745.18px;top:272.00px;width:16.60px;height:76.50px;background:#434950;border-radius:0 0 7px 7px"></div>
<div style="left:746.48px;top:272.80px;width:14.00px;height:74.20px;background:#0a111b;border-radius:0 0 6px 6px"></div>
<div style="left:748.48px;top:275.00px;width:10.00px;height:69.60px;background:#4a627e;border-radius:0 0 4px 4px"></div>
<div style="left:765.37px;top:272.00px;width:16.60px;height:76.50px;background:#434950;border-radius:0 0 7px 7px"></div>
<div style="left:766.67px;top:272.80px;width:14.00px;height:74.20px;background:#0a111b;border-radius:0 0 6px 6px"></div>
<div style="left:768.67px;top:275.00px;width:10.00px;height:69.60px;background:#4a627e;border-radius:0 0 4px 4px"></div>
<div style="left:785.56px;top:272.00px;width:16.60px;height:76.50px;background:#434950;border-radius:0 0 7px 7px"></div>
<div style="left:786.86px;top:272.80px;width:14.00px;height:74.20px;background:#0a111b;border-radius:0 0 6px 6px"></div>
<div style="left:788.86px;top:275.00px;width:10.00px;height:69.60px;background:#4a627e;border-radius:0 0 4px 4px"></div>
<div style="left:31.64px;top:272.80px;width:10.19px;height:46.50px;background:#18191a;border-radius:0 0 3px 3px;box-shadow:0 1px 0 #434950"></div>
<div style="left:51.83px;top:272.80px;width:10.19px;height:46.50px;background:#18191a;border-radius:0 0 3px 3px;box-shadow:0 1px 0 #434950"></div>
<div style="left:72.02px;top:272.80px;width:10.19px;height:46.50px;background:#18191a;border-radius:0 0 3px 3px;box-shadow:0 1px 0 #434950"></div>
<div style="left:112.40px;top:272.80px;width:10.19px;height:46.50px;background:#18191a;border-radius:0 0 3px 3px;box-shadow:0 1px 0 #434950"></div>
<div style="left:132.59px;top:272.80px;width:10.19px;height:46.50px;background:#18191a;border-radius:0 0 3px 3px;box-shadow:0 1px 0 #434950"></div>
<div style="left:172.97px;top:272.80px;width:10.19px;height:46.50px;background:#18191a;border-radius:0 0 3px 3px;box-shadow:0 1px 0 #434950"></div>
<div style="left:193.16px;top:272.80px;width:10.19px;height:46.50px;background:#18191a;border-radius:0 0 3px 3px;box-shadow:0 1px 0 #434950"></div>
<div style="left:213.35px;top:272.80px;width:10.19px;height:46.50px;background:#18191a;border-radius:0 0 3px 3px;box-shadow:0 1px 0 #434950"></div>
<div style="left:253.73px;top:272.80px;width:10.19px;height:46.50px;background:#18191a;border-radius:0 0 3px 3px;box-shadow:0 1px 0 #434950"></div>
<div style="left:273.92px;top:272.80px;width:10.19px;height:46.50px;background:#18191a;border-radius:0 0 3px 3px;box-shadow:0 1px 0 #434950"></div>
<div style="left:314.30px;top:272.80px;width:10.19px;height:46.50px;background:#18191a;border-radius:0 0 3px 3px;box-shadow:0 1px 0 #434950"></div>
<div style="left:334.49px;top:272.80px;width:10.19px;height:46.50px;background:#18191a;border-radius:0 0 3px 3px;box-shadow:0 1px 0 #434950"></div>
<div style="left:354.68px;top:272.80px;width:10.19px;height:46.50px;background:#18191a;border-radius:0 0 3px 3px;box-shadow:0 1px 0 #434950"></div>
<div style="left:395.06px;top:272.80px;width:10.19px;height:46.50px;background:#18191a;border-radius:0 0 3px 3px;box-shadow:0 1px 0 #434950"></div>
<div style="left:415.25px;top:272.80px;width:10.19px;height:46.50px;background:#18191a;border-radius:0 0 3px 3px;box-shadow:0 1px 0 #434950"></div>
<div style="left:455.63px;top:272.80px;width:10.19px;height:46.50px;background:#18191a;border-radius:0 0 3px 3px;box-shadow:0 1px 0 #434950"></div>
<div style="left:475.82px;top:272.80px;width:10.19px;height:46.50px;background:#18191a;border-radius:0 0 3px 3px;box-shadow:0 1px 0 #434950"></div>
<div style="left:496.01px;top:272.80px;width:10.19px;height:46.50px;background:#18191a;border-radius:0 0 3px 3px;box-shadow:0 1px 0 #434950"></div>
<div style="left:536.39px;top:272.80px;width:10.19px;height:46.50px;background:#18191a;border-radius:0 0 3px 3px;box-shadow:0 1px 0 #434950"></div>
<div style="left:556.58px;top:272.80px;width:10.19px;height:46.50px;background:#18191a;border-radius:0 0 3px 3px;box-shadow:0 1px 0 #434950"></div>
<div style="left:596.96px;top:272.80px;width:10.19px;height:46.50px;background:#18191a;border-radius:0 0 3px 3px;box-shadow:0 1px 0 #434950"></div>
<div style="left:617.15px;top:272.80px;width:10.19px;height:46.50px;background:#18191a;border-radius:0 0 3px 3px;box-shadow:0 1px 0 #434950"></div>
<div style="left:637.34px;top:272.80px;width:10.19px;height:46.50px;background:#18191a;border-radius:0 0 3px 3px;box-shadow:0 1px 0 #434950"></div>
<div style="left:677.72px;top:272.80px;width:10.19px;height:46.50px;background:#18191a;border-radius:0 0 3px 3px;box-shadow:0 1px 0 #434950"></div>
<div style="left:697.91px;top:272.80px;width:10.19px;height:46.50px;background:#18191a;border-radius:0 0 3px 3px;box-shadow:0 1px 0 #434950"></div>
<div style="left:738.29px;top:272.80px;width:10.19px;height:46.50px;background:#18191a;border-radius:0 0 3px 3px;box-shadow:0 1px 0 #434950"></div>
<div style="left:758.48px;top:272.80px;width:10.19px;height:46.50px;background:#18191a;border-radius:0 0 3px 3px;box-shadow:0 1px 0 #434950"></div>
<div style="left:778.67px;top:272.80px;width:10.19px;height:46.50px;background:#18191a;border-radius:0 0 3px 3px;box-shadow:0 1px 0 #434950"></div>
<div style="left:0.00px;top:349.00px;width:831.40px;height:8.00px;background:#0f0f10"></div>
<div style="left:0.00px;top:367.70px;width:831.40px;height:11.30px;background:#0d0c0c"></div>
<div style="left:0.00px;top:357.00px;width:831.40px;height:10.70px;background:linear-gradient(to bottom,#313131,#2b2b2b 20%,#2a2a2a)"></div>
<div style="left:-83.65px;top:379.00px;width:78.50px;height:77.00px;border:1.2px solid #6d7f8e;border-top:none;border-radius:0 0 7px 7px;box-sizing:border-box"></div>
<div class="t" style="left:-144.40px;top:401.50px;width:200px;font-size:12px;color:#a9cde8;letter-spacing:0.8px;text-indent:0.8px">&#8211;2</div>
<div class="t" style="left:-144.40px;top:433.30px;width:200px;font-size:12px;color:#7f8f9e;">F5</div>
<div style="left:-2.80px;top:379.00px;width:78.50px;height:77.00px;border:1.2px solid #6d7f8e;border-top:none;border-radius:0 0 7px 7px;box-sizing:border-box"></div>
<div class="t" style="left:-63.10px;top:401.50px;width:200px;font-size:12px;color:#a9cde8;letter-spacing:0.8px;text-indent:0.8px">&#8211;1</div>
<div class="t" style="left:-63.10px;top:433.30px;width:200px;font-size:12px;color:#7f8f9e;">G5</div>
<div style="left:78.05px;top:379.00px;width:78.50px;height:77.00px;border:1.2px solid #6d7f8e;border-top:none;border-radius:0 0 7px 7px;box-sizing:border-box"></div>
<div class="t" style="left:17.10px;top:401.50px;width:200px;font-size:12px;color:#a9cde8;letter-spacing:0.8px;text-indent:0.8px">H</div>
<div class="t" style="left:17.10px;top:433.30px;width:200px;font-size:12px;color:#7f8f9e;">A5</div>
<div style="left:158.90px;top:379.00px;width:78.50px;height:77.00px;border:1.2px solid #6d7f8e;border-top:none;border-radius:0 0 7px 7px;box-sizing:border-box"></div>
<div class="t" style="left:101.60px;top:401.50px;width:200px;font-size:12px;color:#a9cde8;letter-spacing:0.8px;text-indent:0.8px">+1</div>
<div class="t" style="left:101.60px;top:433.30px;width:200px;font-size:12px;color:#7f8f9e;">B5</div>
<div style="left:239.75px;top:379.00px;width:78.50px;height:77.00px;border:1.2px solid #6d7f8e;border-top:none;border-radius:0 0 7px 7px;box-sizing:border-box"></div>
<div class="t" style="left:177.30px;top:401.50px;width:200px;font-size:12px;color:#a9cde8;letter-spacing:0.8px;text-indent:0.8px">+2</div>
<div class="t" style="left:177.30px;top:433.30px;width:200px;font-size:12px;color:#7f8f9e;">C6</div>
<div style="left:320.60px;top:379.00px;width:78.50px;height:77.00px;border:1.2px solid #6d7f8e;border-top:none;border-radius:0 0 7px 7px;box-sizing:border-box"></div>
<div class="t" style="left:259.85px;top:433.30px;width:200px;font-size:12px;color:#7f8f9e;">D6</div>
<div style="left:401.45px;top:379.00px;width:78.50px;height:77.00px;border:1.2px solid #6d7f8e;border-top:none;border-radius:0 0 7px 7px;box-sizing:border-box"></div>
<div class="t" style="left:340.70px;top:433.30px;width:200px;font-size:12px;color:#7f8f9e;">E6</div>
<div style="left:482.30px;top:379.00px;width:78.50px;height:77.00px;border:1.2px solid #6d7f8e;border-top:none;border-radius:0 0 7px 7px;box-sizing:border-box"></div>
<div class="t" style="left:420.20px;top:401.50px;width:200px;font-size:12px;color:#a9cde8;letter-spacing:0.8px;text-indent:0.8px">+5</div>
<div class="t" style="left:420.20px;top:433.30px;width:200px;font-size:12px;color:#7f8f9e;">F6</div>
<div style="left:563.15px;top:379.00px;width:78.50px;height:77.00px;border:1.2px solid #6d7f8e;border-top:none;border-radius:0 0 7px 7px;box-sizing:border-box"></div>
<div class="t" style="left:502.10px;top:401.50px;width:200px;font-size:12px;color:#a9cde8;letter-spacing:0.8px;text-indent:0.8px">+6</div>
<div class="t" style="left:502.10px;top:433.30px;width:200px;font-size:12px;color:#7f8f9e;">G6</div>
<div style="left:644.00px;top:379.00px;width:78.50px;height:77.00px;border:1.2px solid #6d7f8e;border-top:none;border-radius:0 0 7px 7px;box-sizing:border-box"></div>
<div class="t" style="left:583.10px;top:401.50px;width:200px;font-size:12px;color:#a9cde8;letter-spacing:0.8px;text-indent:0.8px">+7</div>
<div class="t" style="left:583.10px;top:433.30px;width:200px;font-size:12px;color:#7f8f9e;">A6</div>
<div style="left:724.85px;top:379.00px;width:78.50px;height:77.00px;border:1.2px solid #6d7f8e;border-top:none;border-radius:0 0 7px 7px;box-sizing:border-box"></div>
<div class="t" style="left:667.40px;top:433.30px;width:200px;font-size:12px;color:#7f8f9e;">B6</div>
<div style="left:-22.77px;top:379.00px;width:40.00px;height:58.50px;background:#000;border:1.2px solid #6d7f8e;border-top:none;border-radius:0 0 7px 7px;box-sizing:border-box"></div>
<div class="t" style="left:-102.77px;top:415.30px;width:200px;font-size:12px;color:#7f8f9e;">F#5</div>
<div style="left:58.08px;top:379.00px;width:40.00px;height:58.50px;background:#000;border:1.2px solid #6d7f8e;border-top:none;border-radius:0 0 7px 7px;box-sizing:border-box"></div>
<div class="t" style="left:-21.92px;top:415.30px;width:200px;font-size:12px;color:#7f8f9e;">G#5</div>
<div style="left:138.93px;top:379.00px;width:40.00px;height:58.50px;background:#000;border:1.2px solid #6d7f8e;border-top:none;border-radius:0 0 7px 7px;box-sizing:border-box"></div>
<div class="t" style="left:58.93px;top:386.40px;width:200px;font-size:12px;color:#a9cde8;">R</div>
<div class="t" style="left:58.93px;top:415.30px;width:200px;font-size:12px;color:#7f8f9e;">A#5</div>
<div style="left:299.43px;top:379.00px;width:40.00px;height:58.50px;background:#000;border:1.2px solid #6d7f8e;border-top:none;border-radius:0 0 7px 7px;box-sizing:border-box"></div>
<div class="t" style="left:219.43px;top:415.30px;width:200px;font-size:12px;color:#7f8f9e;">C#6</div>
<div style="left:380.28px;top:379.00px;width:40.00px;height:58.50px;background:#000;border:1.2px solid #6d7f8e;border-top:none;border-radius:0 0 7px 7px;box-sizing:border-box"></div>
<div class="t" style="left:300.28px;top:415.30px;width:200px;font-size:12px;color:#7f8f9e;">D#6</div>
<div style="left:543.17px;top:379.00px;width:40.00px;height:58.50px;background:#000;border:1.2px solid #6d7f8e;border-top:none;border-radius:0 0 7px 7px;box-sizing:border-box"></div>
<div class="t" style="left:463.17px;top:415.30px;width:200px;font-size:12px;color:#7f8f9e;">F#6</div>
<div style="left:624.02px;top:379.00px;width:40.00px;height:58.50px;background:#000;border:1.2px solid #6d7f8e;border-top:none;border-radius:0 0 7px 7px;box-sizing:border-box"></div>
<div class="t" style="left:544.02px;top:415.30px;width:200px;font-size:12px;color:#7f8f9e;">G#6</div>
<div style="left:704.88px;top:379.00px;width:40.00px;height:58.50px;background:#000;border:1.2px solid #6d7f8e;border-top:none;border-radius:0 0 7px 7px;box-sizing:border-box"></div>
<div class="t" style="left:624.88px;top:415.30px;width:200px;font-size:12px;color:#7f8f9e;">A#6</div>
<div style="left:-10.00px;top:378.80px;width:813.00px;height:1.20px;background:#6d7f8e"></div>
<div style="left:810.50px;top:410.70px;width:21.50px;height:16.00px;border:1.3px solid #6d7f8e;border-radius:4px;box-sizing:border-box"></div>
<div class="t" style="left:721.30px;top:408.70px;width:200px;font-size:14px;color:#a9cde8;">&gt;</div>
<div style="left:859.60px;top:181.00px;width:10.40px;height:2.00px;background:#121212"></div>
<div style="left:859.60px;top:186.00px;width:10.40px;height:2.00px;background:#121212"></div>
<div style="left:859.60px;top:191.00px;width:10.40px;height:2.00px;background:#121212"></div>
<div style="left:859.60px;top:196.00px;width:10.40px;height:2.00px;background:#121212"></div>
<div style="left:859.60px;top:231.50px;width:10.40px;height:2.00px;background:#121212"></div>
<div style="left:859.60px;top:236.50px;width:10.40px;height:2.00px;background:#121212"></div>
<div style="left:859.60px;top:241.50px;width:10.40px;height:2.00px;background:#121212"></div>
<div style="left:859.60px;top:246.50px;width:10.40px;height:2.00px;background:#121212"></div>
<div style="left:859.60px;top:454.00px;width:10.40px;height:2.00px;background:#121212"></div>
<div style="left:859.60px;top:459.00px;width:10.40px;height:2.00px;background:#121212"></div>
<div style="left:859.60px;top:464.00px;width:10.40px;height:2.00px;background:#121212"></div>
<div style="left:859.60px;top:469.00px;width:10.40px;height:2.00px;background:#121212"></div>
<div style="left:324.60px;top:107.60px;width:184.20px;height:756.80px;background:#121111;border:2.6px solid #030303;box-sizing:border-box"></div>
<div class="t" style="left:348.60px;top:112.25px;text-align:left;font-size:14.3px;color:#a6d0ea;">HOME</div>
<div class="t" style="left:348.60px;top:133.72px;text-align:left;font-size:14.3px;color:#a6d0ea;">HOME: Nearest</div>
<div class="t" style="left:348.60px;top:155.19px;text-align:left;font-size:14.3px;color:#a6d0ea;">HOME: +OCT</div>
<div class="t" style="left:348.60px;top:176.66px;text-align:left;font-size:14.3px;color:#a6d0ea;">HOME: &#8211;OCT</div>
<div style="left:327.60px;top:197.80px;width:177.50px;height:19.40px;background:#8cc0e2"></div>
<div class="t" style="left:335.20px;top:198.13px;text-align:left;font-size:14.3px;color:#0c1826;">&#10003;</div>
<div class="t" style="left:350.60px;top:198.13px;text-align:left;font-size:14.3px;color:#0c1826;">REPEAT</div>
<div class="t" style="left:348.60px;top:219.60px;text-align:left;font-size:14.3px;color:#a6d0ea;">HOME: DONT PLAY</div>
<div class="t" style="left:348.60px;top:241.07px;text-align:left;font-size:14.3px;color:#a6d0ea;">ALL NOTES OFF</div>
<div class="t" style="left:348.60px;top:262.54px;text-align:left;font-size:14.3px;color:#a6d0ea;letter-spacing:1.3px">+1</div>
<div class="t" style="left:348.60px;top:284.01px;text-align:left;font-size:14.3px;color:#a6d0ea;letter-spacing:1.3px">+2</div>
<div class="t" style="left:348.60px;top:305.48px;text-align:left;font-size:14.3px;color:#a6d0ea;letter-spacing:1.3px">+3</div>
<div class="t" style="left:348.60px;top:326.95px;text-align:left;font-size:14.3px;color:#a6d0ea;letter-spacing:1.3px">+4</div>
<div class="t" style="left:348.60px;top:348.42px;text-align:left;font-size:14.3px;color:#a6d0ea;letter-spacing:1.3px">+5</div>
<div class="t" style="left:348.60px;top:369.89px;text-align:left;font-size:14.3px;color:#a6d0ea;letter-spacing:1.3px">+6</div>
<div class="t" style="left:348.60px;top:391.36px;text-align:left;font-size:14.3px;color:#a6d0ea;letter-spacing:1.3px">+7</div>
<div class="t" style="left:348.60px;top:412.83px;text-align:left;font-size:14.3px;color:#a6d0ea;letter-spacing:1.3px">+8</div>
<div class="t" style="left:348.60px;top:434.30px;text-align:left;font-size:14.3px;color:#a6d0ea;letter-spacing:1.3px">+9</div>
<div class="t" style="left:348.60px;top:455.77px;text-align:left;font-size:14.3px;color:#a6d0ea;letter-spacing:1.3px">+10</div>
<div class="t" style="left:348.60px;top:477.24px;text-align:left;font-size:14.3px;color:#a6d0ea;letter-spacing:1.3px">+11</div>
<div class="t" style="left:348.60px;top:498.71px;text-align:left;font-size:14.3px;color:#a6d0ea;letter-spacing:1.3px">+12</div>
<div class="t" style="left:348.60px;top:520.18px;text-align:left;font-size:14.3px;color:#a6d0ea;letter-spacing:1.3px">+13</div>
<div class="t" style="left:348.60px;top:541.65px;text-align:left;font-size:14.3px;color:#a6d0ea;letter-spacing:1.3px">+14</div>
<div class="t" style="left:348.60px;top:563.12px;text-align:left;font-size:14.3px;color:#a6d0ea;letter-spacing:1.3px">&#8211;1</div>
<div class="t" style="left:348.60px;top:584.59px;text-align:left;font-size:14.3px;color:#a6d0ea;letter-spacing:1.3px">&#8211;2</div>
<div class="t" style="left:348.60px;top:606.06px;text-align:left;font-size:14.3px;color:#a6d0ea;letter-spacing:1.3px">&#8211;3</div>
<div class="t" style="left:348.60px;top:627.53px;text-align:left;font-size:14.3px;color:#a6d0ea;letter-spacing:1.3px">&#8211;4</div>
<div class="t" style="left:348.60px;top:649.00px;text-align:left;font-size:14.3px;color:#a6d0ea;letter-spacing:1.3px">&#8211;5</div>
<div class="t" style="left:348.60px;top:670.47px;text-align:left;font-size:14.3px;color:#a6d0ea;letter-spacing:1.3px">&#8211;6</div>
<div class="t" style="left:348.60px;top:691.94px;text-align:left;font-size:14.3px;color:#a6d0ea;letter-spacing:1.3px">&#8211;7</div>
<div class="t" style="left:348.60px;top:713.41px;text-align:left;font-size:14.3px;color:#a6d0ea;letter-spacing:1.3px">&#8211;8</div>
<div class="t" style="left:348.60px;top:734.88px;text-align:left;font-size:14.3px;color:#a6d0ea;letter-spacing:1.3px">&#8211;9</div>
<div class="t" style="left:348.60px;top:756.35px;text-align:left;font-size:14.3px;color:#a6d0ea;letter-spacing:1.3px">&#8211;10</div>
<div class="t" style="left:348.60px;top:777.82px;text-align:left;font-size:14.3px;color:#a6d0ea;letter-spacing:1.3px">&#8211;11</div>
<div class="t" style="left:348.60px;top:799.29px;text-align:left;font-size:14.3px;color:#a6d0ea;letter-spacing:1.3px">&#8211;12</div>
<div class="t" style="left:348.60px;top:820.76px;text-align:left;font-size:14.3px;color:#a6d0ea;letter-spacing:1.3px">&#8211;13</div>
<div class="t" style="left:348.60px;top:842.23px;text-align:left;font-size:14.3px;color:#a6d0ea;letter-spacing:1.3px">&#8211;14</div>
</body></html>
